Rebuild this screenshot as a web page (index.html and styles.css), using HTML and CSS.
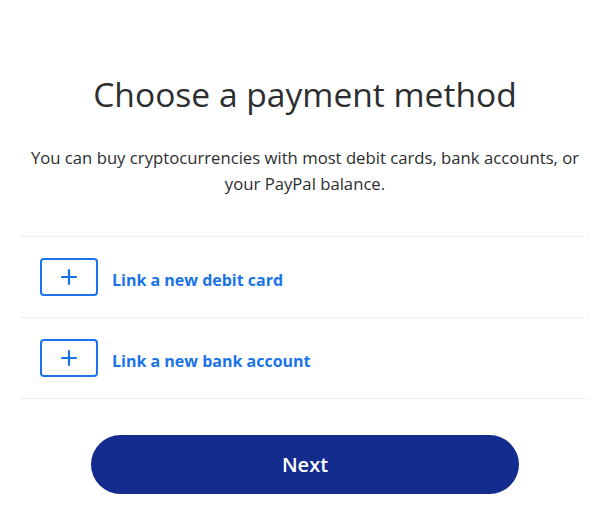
FILE: index.html
```html
<!DOCTYPE html>
<html lang="en">
<head>
    <meta charset="UTF-8">
    <meta name="viewport" content="width=device-width, initial-scale=1.0">
    <title>Choose a payment method</title>
    <link rel="stylesheet" href="styles.css">
</head>
<body>

    <div class="container">
        <h1>Choose a payment method</h1>
        <p class="subtitle">You can buy cryptocurrencies with most debit cards, bank accounts, or your PayPal balance.</p>

        <ul class="methods">
            <li class="method">
                <span class="method-icon">
                    <svg width="18" height="18" viewBox="0 0 18 18"><path d="M9 2v14M2 9h14" stroke="currentColor" stroke-width="2.2" stroke-linecap="round"/></svg>
                </span>
                <a href="#" class="method-link">Link a new debit card</a>
            </li>
            <li class="method">
                <span class="method-icon">
                    <svg width="18" height="18" viewBox="0 0 18 18"><path d="M9 2v14M2 9h14" stroke="currentColor" stroke-width="2.2" stroke-linecap="round"/></svg>
                </span>
                <a href="#" class="method-link">Link a new bank account</a>
            </li>
        </ul>

        <button type="button" class="btn">Next</button>
    </div>

</body>
</html>
```

FILE: styles.css
```css
body {
    font-family: "Open Sans", "Noto Sans", sans-serif;
    background-color: #ffffff;
    color: #2c2e2f;
    margin: 0;
    padding: 0;
}
.container {
    padding: 73px 20px 0;
}
h1 {
    text-align: center;
    font-weight: 400;
    font-size: 33.6px;
    line-height: 42px;
    margin: 0 0 30px;
}
.subtitle {
    text-align: center;
    font-size: 16.7px;
    line-height: 26px;
    margin: 0 0 39px;
}
.methods {
    list-style: none;
    margin: 0;
    padding: 0;
    border-top: 1px dotted #e6e6e6;
}
.method {
    display: flex;
    align-items: center;
    gap: 14px;
    height: 80px;
    padding: 0 20px;
    border-bottom: 1px dotted #e6e6e6;
}
.method-icon {
    display: flex;
    align-items: center;
    justify-content: center;
    width: 54px;
    height: 34px;
    border: 2px solid #1a73e8;
    border-radius: 4px;
    color: #1a73e8;
}
.method-link {
    color: #1a73e8;
    font-weight: 700;
    font-size: 16px;
    text-decoration: none;
    padding-top: 5px;
}
.btn {
    display: block;
    width: 428px;
    height: 59px;
    margin: 36px auto 0;
    background-color: #142c8e;
    color: #ffffff;
    font-family: inherit;
    font-size: 20px;
    font-weight: 600;
    border: none;
    border-radius: 30px;
    cursor: pointer;
}
```
